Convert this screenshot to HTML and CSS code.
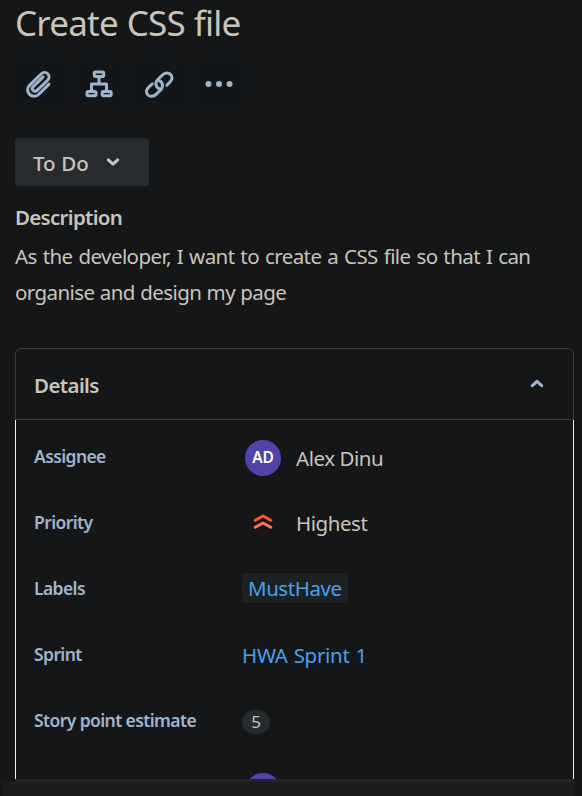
FILE: index.html
```html
<!DOCTYPE html>
<html lang="en">
<head>
<meta charset="utf-8">
<title>Create CSS file</title>
<link rel="stylesheet" href="styles.css">
</head>
<body>
<main class="issue">
  <h1 class="title"><span>Create CSS file</span></h1>
  <div class="toolbar">
    <button class="tool" aria-label="Attach"><svg width="48" height="48" viewBox="0 0 48 48"><path d="M34 24.1 23.9 34.2C21.3 36.8 17.2 36.9 14.6 34.4S11.9 28 14.5 25.4L26.1 14C28 12.1 30.9 12 32.7 13.8S34.5 18.3 32.6 20.2L22.1 30.4C21 31.5 19.2 31.6 18.1 30.5S17.1 27.7 18.2 26.6L28.1 16.9" /></svg></button>
    <button class="tool" aria-label="Add child issue"><svg width="48" height="48" viewBox="0 0 48 48"><rect x="19.3" y="12" width="9.4" height="4.4" rx="1.2"/><rect x="12" y="31.4" width="9" height="4.4" rx="1.3"/><rect x="27.2" y="31.4" width="9" height="4.4" rx="1.3"/><path d="M24 17v7M16.5 31v-7h15v7"/></svg></button>
    <button class="tool" aria-label="Link issue"><svg width="48" height="48" viewBox="0 0 48 48"><path d="M24.2 28.7C22.2 27.7 20.7 25.5 21 23.3 21.1 21.8 21.8 20.5 22.8 19.5L27.4 15C30 12.4 33.6 12.5 35.5 14.4S37.8 19.2 35.2 21.8L31.8 25.2M24.3 20.6C26.4 21.6 27.8 23.8 27.5 26.1 27.3 27.6 26.7 28.9 25.7 29.9L21.1 34.4C18.5 36.9 14.9 36.9 13 35S10.7 30.2 13.3 27.6L17.3 23.8"/></svg></button>
    <button class="tool" aria-label="More actions"><svg width="48" height="48" viewBox="0 0 48 48"><g class="dots"><circle cx="13.5" cy="24" r="3"/><circle cx="24" cy="24" r="3"/><circle cx="34.5" cy="24" r="3"/></g></svg></button>
  </div>
  <button class="status"><span>To Do</span><svg class="chevron" width="14" height="10" viewBox="0 0 14 10"><path d="M2.3 2.8 7 7.2l4.7-4.4"/></svg></button>
  <h2 class="subtitle"><span>Description</span></h2>
  <p class="description"><span class="line1">As the developer, I want to create a CSS file so that I can</span><br><span class="line2">organise and design my page</span></p>
  <section class="details">
    <header class="details-head"><h2><span>Details</span></h2><svg class="chevron blue" width="14" height="10" viewBox="0 0 14 10"><path d="M2.3 6.7 7 2.3l4.7 4.4"/></svg></header>
    <div class="rows">
      <div class="row"><span class="label">Assignee</span><div class="value lower-value"><span class="avatar">AD</span><span>Alex Dinu</span></div></div>
      <div class="row"><span class="label">Priority</span><div class="value"><svg class="priority" width="36" height="36" viewBox="0 0 36 36"><path d="M10.3 15.2 18 11l7.7 4.2"/><path class="lower" d="M10.3 22.2 18 18l7.7 4.2"/></svg><span>Highest</span></div></div>
      <div class="row"><span class="label">Labels</span><div class="value link tag-value"><span class="tag">MustHave</span></div></div>
      <div class="row"><span class="label">Sprint</span><div class="value link"><span class="sprint">HWA Sprint 1</span></div></div>
      <div class="row"><span class="label">Story point estimate</span><div class="value lower-value"><span class="badge">5</span></div></div>
      <div class="row partial"><span class="label"></span><div class="value"><span class="avatar"></span></div></div>
    </div>
  </section>
  <footer class="bottom"></footer>
</main>
</body>
</html>
```
FILE: styles.css
```css
* { box-sizing: border-box; }
body { margin: 0; background: #151618; color: #c9c4bc; font-family: "Noto Sans", "Open Sans", sans-serif; font-size: 20.5px; overflow: hidden; }
h1, h2, p { margin: 0; font-weight: 400; }
button { border: 0; padding: 0; font: inherit; color: inherit; }
svg { display: block; fill: none; stroke-linecap: round; stroke-linejoin: round; }
.issue { height: 796px; padding: 0 8px 0 15px; display: flex; flex-direction: column; overflow: hidden; white-space: nowrap; }
.title { height: 60px; font-size: 35px; line-height: 46px; letter-spacing: -0.8px; word-spacing: 0.6px; }
.toolbar { display: flex; gap: 12px; height: 48px; }
.tool { width: 48px; height: 48px; border-radius: 5px; background: #121619; }
.tool svg { stroke: #9fb5cd; stroke-width: 3; }
.tool .dots { fill: #9fb5cd; stroke: none; }
.status { display: flex; align-items: center; width: 134px; height: 48px; margin-top: 30px; padding: 2px 0 0 18px; border-radius: 4px; background: #282b2d; font-weight: 500; letter-spacing: -0.2px; word-spacing: 1px; }
.status .chevron { margin: -2px 0 0 18px; }
.chevron { stroke: #c9c4bc; stroke-width: 3; }
.chevron.blue { stroke: #9fb5cd; }
.subtitle { height: 52px; font-size: 20.5px; line-height: 62px; font-weight: 600; letter-spacing: -0.7px; }
.description { height: 110px; line-height: 36px; letter-spacing: -0.57px; }
.line1 { word-spacing: 1.1px; }
.line2 { word-spacing: 0.5px; }
.details { height: 431px; display: flex; flex-direction: column; }
.details-head { display: flex; flex: none; justify-content: space-between; align-items: center; height: 72px; padding: 0 29px 0 18px; border: 1px solid #393d3f; border-radius: 6px 6px 0 0; }
.details-head h2 { font-size: 20.5px; font-weight: 600; letter-spacing: -0.6px; padding-top: 2px; }
.rows { height: 359px; overflow: hidden; border: solid #f0f0f0; border-width: 0 1px; padding: 3px 0 0 18px; }
.row { display: flex; align-items: center; height: 66px; }
.label { width: 208px; color: #9fb5cd; font-size: 17.5px; font-weight: 600; letter-spacing: -0.6px; padding-bottom: 1px; }
.value { display: flex; align-items: center; letter-spacing: -0.45px; padding-top: 1px; }
.lower-value { padding-top: 3px; }
.tag-value { padding: 0 0 1px; }
.partial { padding-top: 8px; }
.avatar { width: 36px; height: 36px; margin: 0 15px 0 3px; border-radius: 50%; background: #5243aa; color: #fff; font-size: 15.5px; line-height: 35px; font-weight: 600; text-align: center; letter-spacing: -0.2px; }
.priority { margin: 0 15px 0 3px; stroke: #ff5630; stroke-width: 3; }
.priority .lower { stroke: #ff7452; }
.link { color: #4c9fef; }
.tag { width: 106px; height: 30px; line-height: 30px; padding-left: 6px; border-radius: 4px; background: #1d2122; }
.sprint { letter-spacing: -0.3px; word-spacing: 1px; }
.badge { width: 28px; height: 24px; line-height: 24px; border-radius: 12px; background: #282b2d; font-size: 17px; text-align: center; }
.bottom { height: 17px; border-top: 3px solid #242527; background: #1b1c1e; box-shadow: -12px 3px 0 #1b1c1e; }
```
